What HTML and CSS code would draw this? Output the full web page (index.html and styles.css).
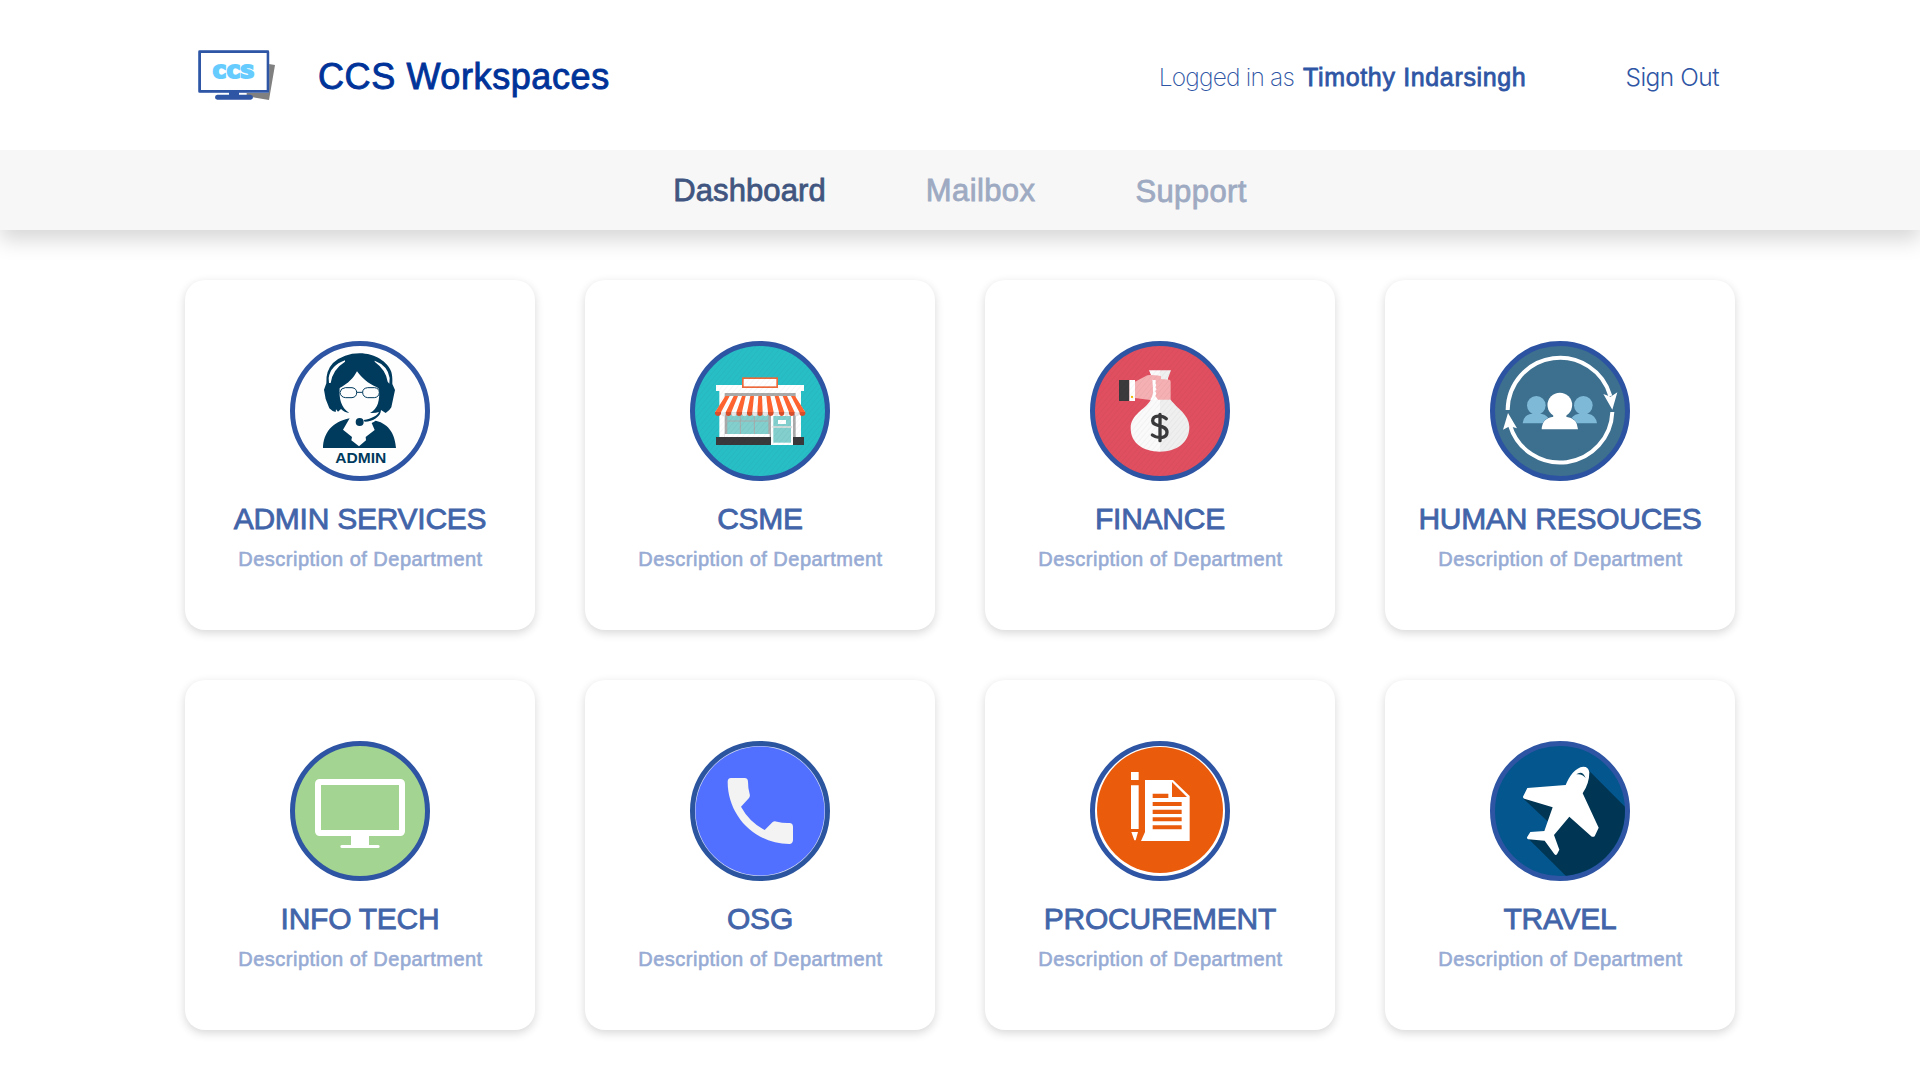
FILE: index.html
```html
<!DOCTYPE html>
<html lang="en">
<head>
<meta charset="utf-8">
<title>CCS Workspaces</title>
<link rel="stylesheet" href="styles.css">
</head>
<body>
<header class="header">
  <svg class="logo" viewBox="54 60 231 150">
    <path fill="#808080" d="M262 101L285 105L267 210L200 199V180H262Z"/>
    <rect x="58" y="64" width="206" height="121" rx="2" fill="#fff" stroke="#6f8bc4" stroke-width="8"/>
    <rect x="59.500" y="65.500" width="204" height="118" fill="#fff" stroke="#2f56a5" stroke-width="7"/>
    <path fill="#2f56a5" d="M147 186H177V194H212Q219 195 219 201.500T212 209H112Q105 208 105 201.500T112 194H147Z"/>
    <text class="logo-text" x="97" y="143" textLength="126" lengthAdjust="spacingAndGlyphs">CCS</text>
  </svg>
  <h1 class="brand">CCS Workspaces</h1>
  <div class="account">
    <span class="account-label">Logged in as</span>
    <span class="account-name">Timothy Indarsingh</span>
    <a class="sign-out">Sign Out</a>
  </div>
</header>

<nav class="nav">
  <a class="nav-link nav-link-active">Dashboard</a>
  <a class="nav-link">Mailbox</a>
  <a class="nav-link nav-link-support">Support</a>
</nav>

<main class="grid">
  <article class="card">
    <svg class="icon" viewBox="30 33 420 420">
      <circle cx="240" cy="243" r="202.500" fill="#fefefe" stroke="#2e55a3" stroke-width="15"/>
      <path fill="#003a5d" d="M239 70C284 70 324 96 334 126Q338 139 337 162L345 180L334 232Q329 242 317 249L303 240C302 260 280 275 254 275L251 270C275 266 293 256 297 246Q286 250 270 249C294 237 300 210 297 177L291 172C265 162 242 140 231 124C221 143 205 161 179 174C177 205 182 232 208 249Q193 248 183 237L174 245L168 238L167 246Q156 244 148 235L137 207L132 179L139 160Q137 122 159 99Q192 70 239 70Z"/>
      <path fill="#fff" d="M195 91Q151 107 146 144L147 159L152 159Q158 118 195 95ZM284 92Q324 107 329 144L328 161L323 155Q318 120 284 95Z"/>
      <path fill="none" stroke="#003a5d" stroke-width="3" d="M196 173H216Q230 175 230 188T216 203H197Q182 202 180 187Q182 174 196 173ZM263 173H284Q298 175 298 188Q296 202 283 203H263Q249 201 248 188T263 173ZM230 187H248"/>
      <path fill="#003a5d" d="M129 354C130 309 156 276 209 265L189 299L216 321L214 331L237 349L258 331L257 321L284 300L275 279Q281 276 287 272C330 282 345 316 348 354Z"/>
      <circle cx="239" cy="276" r="12" fill="#003a5d"/>
      <text class="admin-label" x="166" y="398" textLength="153" lengthAdjust="spacingAndGlyphs">ADMIN</text>
    </svg>
    <h2 class="card-title">ADMIN SERVICES</h2>
    <p class="card-text">Description of Department</p>
  </article>

  <article class="card">
    <svg class="icon" viewBox="30 33 420 420">
      <defs>
        <pattern id="stripes" width="12" height="12" patternUnits="userSpaceOnUse" patternTransform="rotate(40)">
          <rect width="3" height="12" fill="#000" opacity=".03"/>
        </pattern>
      </defs>
      <circle cx="240" cy="243" r="202.500" fill="#28bec6" stroke="#2e55a3" stroke-width="15"/>
      <rect x="118" y="180" width="245" height="142" fill="#fff"/>
      <rect x="134" y="189" width="213" height="132" fill="#aaa"/>
      <rect x="108" y="165" width="264" height="18" fill="#fff"/>
      <rect x="188.500" y="144.500" width="103" height="27" fill="#fff" stroke="#ee6a3b" stroke-width="5"/>
      <rect x="142" y="255" width="123" height="57" fill="#82cfcd"/>
      <path stroke="#aaa" stroke-width="3" fill="none" d="M142 273H265M181 255V312M223 255V312"/>
      <rect x="134" y="312" width="135" height="9" fill="#fff"/>
      <rect x="108" y="321" width="264" height="24" fill="#39393b"/>
      <rect x="273" y="250" width="66" height="95" fill="#fff"/>
      <rect x="280" y="258" width="53" height="80" fill="#82cfcd"/>
      <rect x="294" y="270" width="24" height="12" fill="#fff"/>
      <path stroke="#ddd" stroke-width="5" d="M277 291H336"/>
      <path fill="#fff" d="M139 198H343L376 247H105Z"/>
      <path fill="#ff6430" d="M136 198H149L123 247H105ZM161 198H174L154 247H137ZM186 198H197L186 247H169ZM211 198H222L217 247H201ZM235 198H246L248 247H232ZM259 198H271L281 247H264ZM284 198H296L313 247H297ZM308 198H321L344 247H327ZM333 198H345L376 247H358Z"/>
      <path fill="#d94f2c" d="M105 246H123V252Q121 258 114 258T105 252ZM137 246H154V252Q151 258 145 258T137 252ZM169 246H186V252Q184 258 177 258T169 252ZM201 246H217V252Q215 258 209 258T201 252ZM232 246H248V252Q246 258 240 258T232 252ZM264 246H281V252Q278 258 272 258T264 252ZM297 246H313V252Q310 258 305 258T297 252ZM327 246H344V252Q342 258 335 258T327 252ZM358 246H376V252Q374 258 367 258T358 252Z"/>
      <path fill="#e8e8e8" d="M123 247H137V252Q136 259 130 259T123 252ZM154 247H169V252Q168 259 162 259T154 252ZM186 247H201V252Q200 259 194 259T186 252ZM217 247H232V252Q231 259 225 259T217 252ZM248 247H264V252Q262 259 256 259T248 252ZM281 247H297V252Q295 259 289 259T281 252ZM313 247H327V252Q326 259 320 259T313 252ZM344 247H358V252Q357 259 351 259T344 252Z"/>
      <circle cx="240" cy="243" r="195" fill="url(#stripes)"/>
    </svg>
    <h2 class="card-title">CSME</h2>
    <p class="card-text">Description of Department</p>
  </article>

  <article class="card">
    <svg class="icon" viewBox="30 33 420 420">
      <circle cx="240" cy="243" r="202.500" fill="#e04f60" stroke="#2e55a3" stroke-width="15"/>
      <path fill="#fafafa" d="M207 121H240V365C190 365 152 340 152 294C152 253 197 238 212 210C219 196 219 174 217 145Z"/>
      <path fill="#eeefee" d="M240 121H273L264 145V180Q263 197 271 208C290 235 328 254 328 292C328 338 290 365 240 365Z"/>
      <path fill="#f5b0b3" d="M165 155L202 136Q211 134 243 138V147L269 149Q272 151 272 156V206L268 209H234L225 203L227 150H217L219 194Q218 203 211 210L165 204Z"/>
      <path fill="#fff" d="M217 149L226 152L225 160L229 165L225 172L230 178L225 184L229 190L226 198L234 209L211 210Q219 200 219 187Z"/>
      <path fill="#3a3a3c" d="M117 150H148V213H117Z"/>
      <path fill="#fff" d="M148 150H165V213H148Z"/>
      <circle cx="156" cy="201" r="3.500" fill="#f0b400"/>
      <path fill="none" stroke="#3a3a3c" stroke-width="10" stroke-linecap="round" d="M259 266C249 257 218 253 218 273C218 292 261 282 261 307C261 328 230 325 217 315M240 253V332"/>
      <circle cx="240" cy="243" r="195" fill="url(#stripes)"/>
    </svg>
    <h2 class="card-title">FINANCE</h2>
    <p class="card-text">Description of Department</p>
  </article>

  <article class="card">
    <svg class="icon" viewBox="30 33 420 420">
      <circle cx="240" cy="243" r="202.500" fill="#3d6f8e" stroke="#2c53a2" stroke-width="15"/>
      <path fill="none" stroke="#fff" stroke-width="12" d="M83 240A157 158 0 0 1 391 198M397 246A157 158 0 0 1 90 286"/>
      <path fill="#fff" d="M370 192L392 200L412 187L397 239ZM84 249L111 295L89 289L69 299Z"/>
      <g fill="#7fb9d8">
        <circle cx="169" cy="226" r="28"/><circle cx="310" cy="226" r="28"/>
        <path d="M128 280Q131 254 156 251H183Q207 254 210 280ZM270 280Q272 254 297 251H324Q347 254 351 280Z"/>
      </g>
      <g fill="#fff" stroke="#3d6f8e" stroke-width="3" paint-order="stroke">
        <path d="M185 298Q186 264 221 260V252H258V260Q292 264 294 298Z"/>
        <circle cx="239.500" cy="225" r="37"/>
      </g>
      <path fill="#fff" d="M220 240H259V268H220Z"/>
    </svg>
    <h2 class="card-title">HUMAN RESOUCES</h2>
    <p class="card-text">Description of Department</p>
  </article>

  <article class="card">
    <svg class="icon" viewBox="30 33 420 420">
      <circle cx="240" cy="243" r="202.500" fill="#a4d492" stroke="#2e55a3" stroke-width="15"/>
      <rect x="114" y="156" width="252" height="153" rx="5" fill="none" stroke="#fff" stroke-width="18"/>
      <path fill="#fff" d="M213 315H267V345H295Q299 346 299 349.500T295 354H185Q181 353 181 349.500T185 345H213Z"/>
    </svg>
    <h2 class="card-title">INFO TECH</h2>
    <p class="card-text">Description of Department</p>
  </article>

  <article class="card">
    <svg class="icon" viewBox="30 33 420 420">
      <circle cx="240" cy="243" r="202.500" fill="#d5dcf5" stroke="#2c55a0" stroke-width="15"/>
      <circle cx="240" cy="243" r="193.500" fill="#5170ff"/>
      <path fill="#f3f3f3" d="M153 144H194Q204 145 204 155Q204 176 209 192Q211 199 207 204L183 230Q208 276 254 300L278 276Q283 272 291 275Q309 280 328 279Q339 280 339 290V331Q338 342 328 342C225 342 143 257 143 155Q143 145 153 144Z"/>
    </svg>
    <h2 class="card-title">OSG</h2>
    <p class="card-text">Description of Department</p>
  </article>

  <article class="card">
    <svg class="icon" viewBox="30 33 420 420">
      <circle cx="240" cy="243" r="202.500" fill="#fff" stroke="#2e55a3" stroke-width="15"/>
      <circle cx="240" cy="240" r="189" fill="#ea5b0c"/>
      <path fill="#fff" d="M153 126H176V150H153ZM153 166H176V297H153ZM154 306H174L167 331H163ZM195 150H279L329 198V333H183L195 306Z"/>
      <path fill="#ea5b0c" d="M276 156L321 201H276ZM218 191H265V204H218ZM218 216H305V228H218ZM218 239H305V252H218ZM218 262H305V274H218ZM218 286H305V298H218Z"/>
    </svg>
    <h2 class="card-title">PROCUREMENT</h2>
    <p class="card-text">Description of Department</p>
  </article>

  <article class="card">
    <svg class="icon" viewBox="30 33 420 420">
      <clipPath id="disc"><circle cx="240" cy="243" r="195"/></clipPath>
      <circle cx="240" cy="243" r="202.500" fill="#04568e" stroke="#2e55a3" stroke-width="15"/>
      <path clip-path="url(#disc)" fill="#003654" d="M322 117L460 255V460H280L143 324L195 300L205 276L130 206L260 170Z"/>
      <path fill="#fff" d="M257 165C268 138 286 112 310 110Q326 110 328 127Q328 161 308 190L356 293L344 319Q338 323 332 317L268 260L222 315L238 359L231 373Q227 377 223 372L194 332L145 328Q139 325 142 320L151 306L193 303L218 232L133 206Q127 203 130 198L142 174Z"/>
      <path fill="#04415f" d="M289 133Q307 119 317 144Q306 130 289 133Z"/>
    </svg>
    <h2 class="card-title">TRAVEL</h2>
    <p class="card-text">Description of Department</p>
  </article>
</main>
</body>
</html>
```
FILE: styles.css
```css
* {
  box-sizing: border-box;
}

body {
  margin: 0;
  height: 1080px;
  overflow: hidden;
  background: #fff;
  font-family: "Liberation Sans", Arial, sans-serif;
}

.header {
  display: flex;
  align-items: center;
  height: 150px;
  padding: 0 201px 0 198px;
}

.logo {
  width: 77px;
  height: 50px;
}

.logo-text {
  font: bold 54px "DejaVu Sans Mono", monospace;
  fill: #66ccff;
  stroke: #66ccff;
  stroke-width: 6px;
  stroke-linejoin: miter;
}

.brand {
  margin: 3px 0 0 43px;
  font-size: 36px;
  font-weight: 400;
  line-height: 42px;
  letter-spacing: 0.6px;
  color: #003399;
  -webkit-text-stroke: 0.9px #003399;
}

.account {
  display: flex;
  align-items: baseline;
  margin-left: auto;
  padding-top: 3px;
  font-size: 25px;
  line-height: 30px;
  color: #2f56a5;
  white-space: nowrap;
}

.account-label {
  font-family: Inter, sans-serif;
  font-size: 24.5px;
  font-weight: 200;
  letter-spacing: -0.8px;
}

.account-name {
  margin-left: 9px;
  letter-spacing: 0.65px;
  -webkit-text-stroke: 0.8px #2f56a5;
}

.sign-out {
  margin-left: 99px;
  font-family: Inter, sans-serif;
  font-size: 24.5px;
  font-weight: 300;
  letter-spacing: -0.5px;
}

.nav {
  display: flex;
  justify-content: center;
  align-items: center;
  gap: 100px;
  height: 80px;
  background: #f7f7f7;
  box-shadow: 0 10px 20px rgba(0, 0, 0, 0.16);
  clip-path: inset(0 0 -40px 0);
}

.nav-link {
  padding-top: 1px;
  font-size: 31px;
  line-height: 36px;
  letter-spacing: 0.4px;
  color: #9eaac2;
  -webkit-text-stroke: 0.8px currentColor;
}

.nav-link-active {
  letter-spacing: 0.1px;
  color: #40557f;
}

.nav-link-support {
  padding-top: 3px;
}

.grid {
  display: grid;
  grid-template-columns: repeat(4, 350px);
  grid-auto-rows: 350px;
  gap: 50px;
  justify-content: center;
  padding-top: 50px;
}

.card {
  display: flex;
  flex-direction: column;
  align-items: center;
  padding-top: 61px;
  border-radius: 20px;
  background: #fff;
  box-shadow: 0 3px 10px rgba(0, 0, 0, 0.16);
}

.icon {
  width: 140px;
  height: 140px;
}

.admin-label {
  font: bold 45px "Liberation Sans", Arial, sans-serif;
  fill: #003a5d;
}

.card-title {
  margin: 19px 0 0;
  font-size: 30px;
  font-weight: 400;
  line-height: 37px;
  letter-spacing: -0.25px;
  color: #4264a9;
  -webkit-text-stroke: 0.8px #4264a9;
}

.card-text {
  margin: 10px 0 0;
  padding-left: 1px;
  font-size: 20px;
  line-height: 24px;
  letter-spacing: 0.48px;
  color: #97abd4;
  -webkit-text-stroke: 0.6px #97abd4;
}
```
